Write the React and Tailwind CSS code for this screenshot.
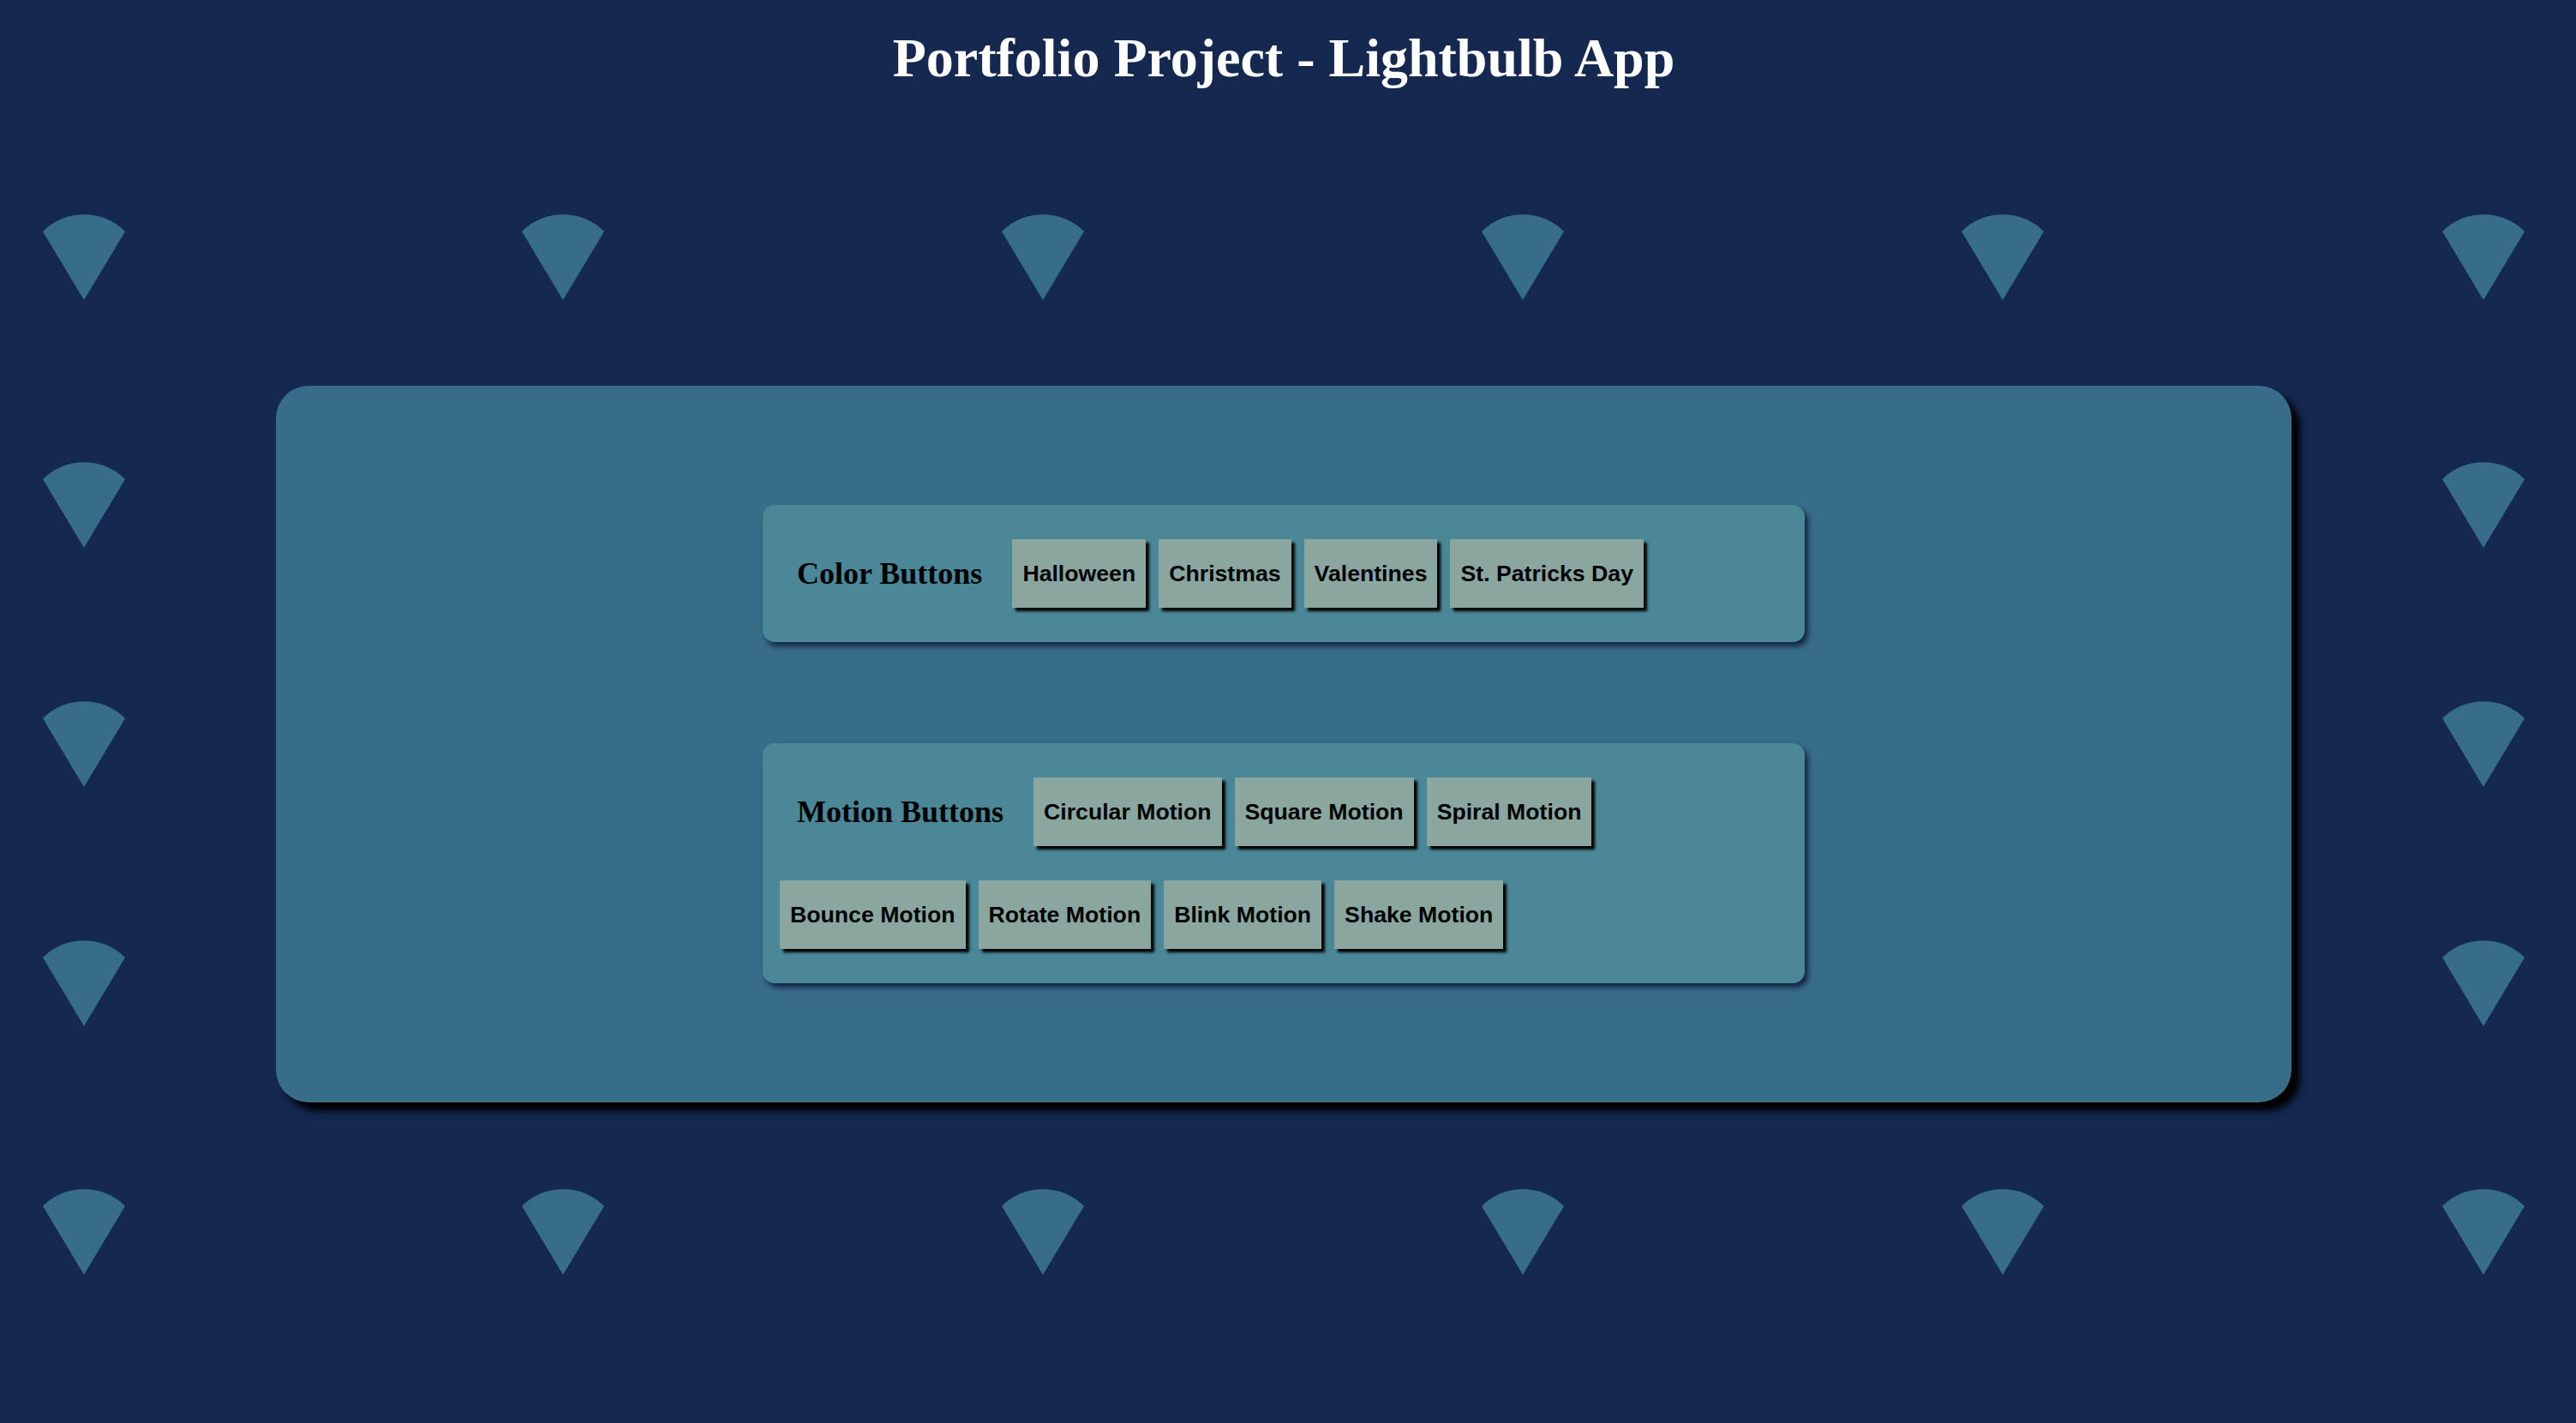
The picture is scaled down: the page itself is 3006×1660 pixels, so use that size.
import React from "react";

const columns = [50, 609, 1169, 1729, 2289, 2850];
const rows = [250, 539, 818, 1097, 1387];

const colorButtons = ["Halloween", "Christmas", "Valentines", "St. Patricks Day"];
const motionTop = ["Circular Motion", "Square Motion", "Spiral Motion"];
const motionBottom = ["Bounce Motion", "Rotate Motion", "Blink Motion", "Shake Motion"];

function Bulb({ x, y }) {
  return (
    <svg
      className="absolute"
      style={{ left: x, top: y }}
      width="96"
      height="100"
      viewBox="0 0 96 100"
    >
      <path d="M0 20 A68 68 0 0 1 96 20 L48 100 Z" fill="#386d8a" />
    </svg>
  );
}

function Btn({ label }) {
  return (
    <button className="h-[80px] px-[12px] bg-[#8aa79f] text-black font-bold text-[26.67px] font-['Liberation_Sans',Arial,sans-serif] shadow-[4px_4px_3px_#000] whitespace-nowrap">
      {label}
    </button>
  );
}

function Heading({ children }) {
  return (
    <h3 className="mx-[20px] text-[36px] leading-[40px] font-bold text-black font-['Liberation_Serif','Times_New_Roman',serif] whitespace-nowrap">
      {children}
    </h3>
  );
}

export default function App() {
  return (
    <div className="relative min-h-[1660px] w-full overflow-hidden bg-[#142850]">
      {/* background bulbs */}
      <div className="absolute inset-0">
        {rows.map((y) =>
          columns.map((x) => <Bulb key={`${x}-${y}`} x={x} y={y} />)
        )}
      </div>

      <div className="relative w-[2996px]">
        <h1 className="pt-[36px] text-center text-[64px] leading-[64px] font-bold text-white font-['Liberation_Serif','Times_New_Roman',serif]">
          Portfolio Project - Lightbulb App
        </h1>

        {/* main card */}
        <div className="mx-auto mt-[350px] w-[2352px] h-[836px] rounded-[38px] bg-[#386d8a] shadow-[10px_10px_8px_#000] flex flex-col items-center justify-center gap-[118px]">
          {/* Color buttons */}
          <div className="w-[1216px] rounded-[14px] bg-[#4a8897] shadow-[4px_5px_6px_rgba(10,20,50,0.8)] px-[20px] py-[40px] flex items-center gap-[15px]">
            <Heading>Color Buttons</Heading>
            {colorButtons.map((b) => (
              <Btn key={b} label={b} />
            ))}
          </div>

          {/* Motion buttons */}
          <div className="w-[1216px] rounded-[14px] bg-[#4a8897] shadow-[4px_5px_6px_rgba(10,20,50,0.8)] px-[20px] py-[40px] flex flex-col gap-[40px]">
            <div className="flex items-center gap-[15px]">
              <Heading>Motion Buttons</Heading>
              {motionTop.map((b) => (
                <Btn key={b} label={b} />
              ))}
            </div>
            <div className="flex items-center gap-[15px]">
              {motionBottom.map((b) => (
                <Btn key={b} label={b} />
              ))}
            </div>
          </div>
        </div>
      </div>
    </div>
  );
}
